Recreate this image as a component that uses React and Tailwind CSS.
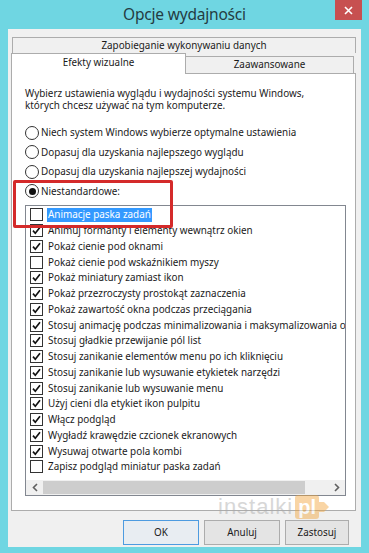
import React from "react";

const items = [
  ["Animacje paska zadań", false, true],
  ["Animuj formanty i elementy wewnątrz okien", true],
  ["Pokaż cienie pod oknami", true],
  ["Pokaż cienie pod wskaźnikiem myszy", false],
  ["Pokaż miniatury zamiast ikon", true],
  ["Pokaż przezroczysty prostokąt zaznaczenia", true],
  ["Pokaż zawartość okna podczas przeciągania", true],
  ["Stosuj animację podczas minimalizowania i maksymalizowania okien", true],
  ["Stosuj gładkie przewijanie pól list", true],
  ["Stosuj zanikanie elementów menu po ich kliknięciu", true],
  ["Stosuj zanikanie lub wysuwanie etykietek narzędzi", true],
  ["Stosuj zanikanie lub wysuwanie menu", true],
  ["Użyj cieni dla etykiet ikon pulpitu", true],
  ["Włącz podgląd", true],
  ["Wygładź krawędzie czcionek ekranowych", true],
  ["Wysuwaj otwarte pola kombi", true],
  ["Zapisz podgląd miniatur paska zadań", false],
];

const radios = [
  ["Niech system Windows wybierze optymalne ustawienia", false],
  ["Dopasuj dla uzyskania najlepszego wyglądu", false],
  ["Dopasuj dla uzyskania najlepszej wydajności", false],
  ["Niestandardowe:", true],
];

function Check({ on }) {
  return (
    <div className="w-[13px] h-[13px] shrink-0 border border-[#333333] bg-white flex items-center justify-center">
      {on && (
        <svg width="11" height="11" viewBox="0 0 11 11">
          <path d="M2 5.6 L4.3 8.2 L9 2.3" fill="none" stroke="#111" strokeWidth="1.7" />
        </svg>
      )}
    </div>
  );
}

function Radio({ on }) {
  return (
    <div className="w-[14px] h-[14px] shrink-0 rounded-full border border-[#333333] bg-white flex items-center justify-center">
      {on && <div className="w-[7px] h-[7px] rounded-full bg-[#111]" />}
    </div>
  );
}

export default function App() {
  return (
    <div className="relative w-[369px] h-[553px] overflow-hidden bg-[#6fd6e2] flex flex-col font-['Noto_Sans','Open_Sans',sans-serif] text-[9.9px] text-[#1a1a1a]">
      {/* title bar */}
      <div className="h-[29px] shrink-0 grid grid-cols-[1fr_auto_1fr]">
        <div />
        <div className="flex items-center text-[15.5px] text-[#243c42] tracking-[-0.2px]">Opcje wydajności</div>
        <div className="flex justify-end items-start pr-[7px]">
          <div className="w-[27px] h-[20px] bg-[#c75050] flex items-center justify-center">
            <svg width="9" height="9" viewBox="0 0 9 9">
              <path d="M1 1 L8 8 M8 1 L1 8" stroke="#fff" strokeWidth="1.6" />
            </svg>
          </div>
        </div>
      </div>

      {/* client */}
      <div className="relative mx-[8px] mb-[6px] flex-1 bg-[#f0f0f0] flex flex-col pt-[8px] pb-[2px]">
        <div className="ml-[3px] mr-[5px] flex-1 flex flex-col">
          {/* tab row 1 */}
          <div className="ml-[1px] h-[16px] border border-b-0 border-[#acacac] bg-[#f0f0f0] flex items-center justify-center leading-none">
            Zapobieganie wykonywaniu danych
          </div>
          {/* tab row 2 */}
          <div className="h-[20px] flex items-end">
            <div className="relative z-10 w-[175px] h-[21px] -mb-px bg-white border border-b-0 border-[#acacac] flex items-center justify-center leading-none pb-[2px]">
              Efekty wizualne
            </div>
            <div className="flex-1 mr-[2px] h-[17px] bg-[#f0f0f0] border border-l-0 border-b-0 border-[#acacac] flex items-center justify-center leading-none">
              Zaawansowane
            </div>
          </div>
          {/* body */}
          <div className="flex-1 bg-white border border-[#acacac] pt-[13px] pl-[13px] flex flex-col">
            <div className="leading-[12px]">
              <div>Wybierz ustawienia wyglądu i wydajności systemu Windows,</div>
              <div>których chcesz używać na tym komputerze.</div>
            </div>
            <div className="mt-[12px] flex flex-col">
              {radios.map(([t, on]) => (
                <div key={t} className="h-[19.5px] flex items-center gap-[2px] whitespace-nowrap">
                  <Radio on={on} />
                  <span>{t}</span>
                </div>
              ))}
            </div>
            <div className="mt-[4px] w-[321px] h-[291px] border border-[#828790] bg-white flex flex-col overflow-hidden">
              <div className="pt-[1px] flex flex-col">
                {items.map(([t, on, sel]) => (
                  <div key={t} className="h-[15.75px] flex items-center pl-[4px] whitespace-nowrap">
                    <Check on={on} />
                    <span
                      className={
                        sel
                          ? "ml-[4px] px-[1px] h-[14px] flex items-center bg-[#3399ff] text-white"
                          : "ml-[4px] px-[1px]"
                      }
                    >
                      {t}
                    </span>
                  </div>
                ))}
              </div>
              <div className="flex-1" />
              <div className="h-[15px] shrink-0 bg-[#f0f0f0] flex items-stretch">
                <div className="w-[17px] flex items-center justify-center">
                  <svg width="6" height="9" viewBox="0 0 6 9">
                    <path d="M5 1 L1.5 4.5 L5 8" fill="none" stroke="#606060" strokeWidth="1.6" />
                  </svg>
                </div>
                <div className="w-[262px] my-[1px] bg-[#cdcdcd]" />
                <div className="flex-1" />
                <div className="w-[17px] flex items-center justify-center">
                  <svg width="6" height="9" viewBox="0 0 6 9">
                    <path d="M1 1 L4.5 4.5 L1 8" fill="none" stroke="#606060" strokeWidth="1.6" />
                  </svg>
                </div>
              </div>
            </div>
          </div>
        </div>

        {/* buttons */}
        <div className="mt-[9px] h-[25px] flex justify-end gap-[5px] pr-[12px]">
          <div className="w-[76px] border border-[#4d9be0] bg-[#e8edf2] flex items-center justify-center">OK</div>
          <div className="w-[76px] border border-[#acacac] bg-[#e4e4e4] flex items-center justify-center">Anuluj</div>
          <div className="w-[64px] border border-[#acacac] bg-[#e4e4e4] flex items-center justify-center">Zastosuj</div>
        </div>

        {/* watermark */}
        <div className="absolute left-[210px] top-[461px] flex items-center opacity-45 pointer-events-none">
          <span className="text-[22px] tracking-[1px] text-[#a8a8a8] font-['Liberation_Sans',sans-serif]">instalki</span>
          <div className="ml-[2px] h-[24px] px-[3px] rounded-[3px] bg-[#f2a43a] flex items-center">
            <span className="text-[20px] font-bold text-white leading-none font-['Liberation_Sans',sans-serif]">pl</span>
          </div>
          <svg width="12" height="14" viewBox="0 0 12 14" className="-ml-[1px]">
            <path d="M0 2 L6 2 L11 7 L6 12 L0 12 Z" fill="#f2a43a" />
          </svg>
        </div>
      </div>

      {/* annotation */}
      <div className="absolute left-[13px] top-[180px] w-[160px] h-[48px] border-[3px] border-[#d42a2a] rounded-[2px] pointer-events-none" />
    </div>
  );
}
